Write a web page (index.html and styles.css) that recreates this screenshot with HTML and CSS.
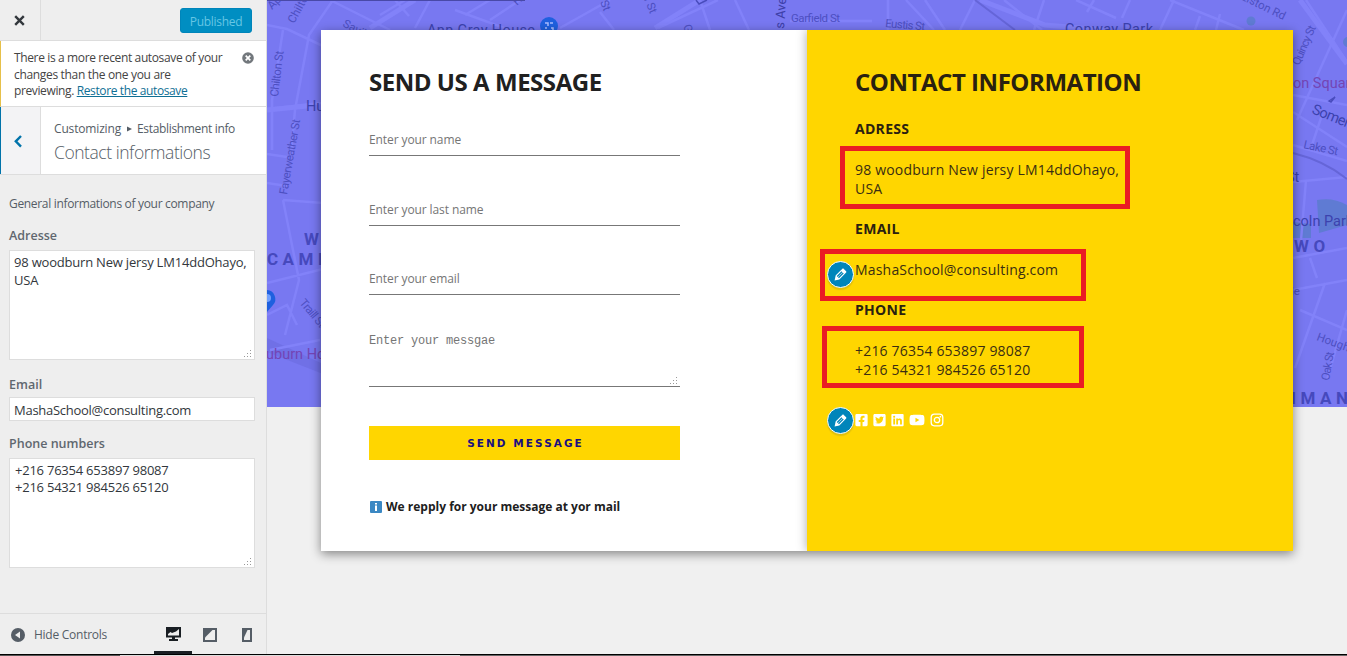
FILE: index.html
```html
<!DOCTYPE html>
<html lang="en">
<head>
<meta charset="utf-8">
<title>Customize: Contact informations</title>
<link rel="stylesheet" href="styles.css">
</head>
<body>
<div class="app">
  <aside class="sidebar">
    <header class="topbar">
      <span class="close"><svg width="11" height="11" viewBox="0 0 11 11"><path d="M1.200 1.200l8.600 8.600M9.800 1.200L1.200 9.800" stroke="#32373c" stroke-width="2.400"/></svg></span>
      <span class="published">Published</span>
    </header>
    <section class="notice">
      <p><span class="n1">There is a more recent autosave of your</span><br><span class="n2">changes than the one you are</span><br><span class="n3">previewing. <a>Restore the autosave</a></span></p>
      <svg class="dismiss" width="12" height="12" viewBox="0 0 12 12"><circle cx="6" cy="6" r="5.800" fill="#72777c"/><path d="M3.700 3.700l4.600 4.600M8.300 3.700L3.700 8.300" stroke="#fff" stroke-width="1.700"/></svg>
    </section>
    <section class="heading">
      <span class="back"><svg width="8" height="13" viewBox="0 0 8 13"><path d="M7 1L1.800 6.300 7 11.600" fill="none" stroke="#0073aa" stroke-width="2.400"/></svg></span>
      <div class="crumbs">
        <div class="crumb"><span class="c1">Customizing</span><svg width="5" height="6" viewBox="0 0 5 6"><path d="M0 .5L5 3 0 5.500z" fill="#555d66"/></svg><span class="c2">Establishment info</span></div>
        <div class="current">Contact informations</div>
      </div>
    </section>
    <section class="controls">
      <p class="desc">General informations of your company</p>
      <label>Adresse</label>
      <div class="area">98 woodburn New jersy LM14ddOhayo,<br>USA<svg class="grip" width="8" height="8" viewBox="0 0 8 8"><path d="M6 0h1v1H6zM3 3h1v1H3zM6 3h1v1H6zM0 6h1v1H0zM3 6h1v1H3zM6 6h1v1H6z"/></svg></div>
      <label>Email</label>
      <div class="line">MashaSchool@consulting.com</div>
      <label>Phone numbers</label>
      <div class="area phones">+216 76354 653897 98087<br>+216 54321 984526 65120<svg class="grip" width="8" height="8" viewBox="0 0 8 8"><path d="M6 0h1v1H6zM3 3h1v1H3zM6 3h1v1H6zM0 6h1v1H0zM3 6h1v1H3zM6 6h1v1H6z"/></svg></div>
    </section>
    <footer class="bottom">
      <svg width="14" height="14" viewBox="0 0 14 14"><circle cx="7" cy="7" r="7" fill="#555d66"/><path d="M9 3.500v7L4 7z" fill="#eee"/></svg>
      <span class="hide">Hide Controls</span>
      <span class="device on"><svg width="15" height="14" viewBox="0 0 15 14"><path d="M0 0h15v10.500H9V12h3v2H3v-2h3v-1.500H0z" fill="#191e23"/><path d="M13 2v6.500H2V7l2.500-2 1.500 1 4-1.500z" fill="#eee"/></svg></span>
      <span class="device"><svg width="14" height="14" viewBox="0 0 14 14"><path d="M0 0h14v14H0z" fill="#555d66"/><path d="M12 2v10H2V9.500L9.500 2z" fill="#eee"/></svg></span>
      <span class="device"><svg width="10" height="14" viewBox="0 0 10 14"><path d="M0 0h10v14H0z" fill="#555d66"/><path d="M8 2v10H2V9.500L5.500 2z" fill="#eee"/></svg></span>
    </footer>
  </aside>
  <main class="preview">
    <svg class="map" width="1080" height="407" viewBox="267 0 1080 407">
      <rect x="267" width="1080" height="407" fill="#7878f1"/>
      <path d="M267 338l56 26v10l-56-22z" fill="#6a6ae0" opacity=".6"/>
      <g fill="#5f7bd3"><path d="M1317 200q16-3 30 5v20l-28 8z"/><circle cx="1251" cy="21" r="4.500"/><path d="M1293 222l18 2v14h-18z"/><circle cx="1348" cy="42" r="5"/></g>
      <g class="roads">
        <path d="M267 25l20 4 38 18M333 0l-24 35-14 75-4 45M283 30l-11 70v50M267 109l54-6M267 154l20 3M267 183l20 3M283 200l16 80-14 55M283 200l40 3M267 283l56-14M267 315l20-10 10 20M270 350l50-10M330 0l60 30M380 15l25-15M395 0l14 16M430 0l-15 28M455 10l55 20M465 15l25-15M490 20l30-20M560 28l50-28M600 12l14 18M658 28l60-28M700 0l10 30M735 0l14 30M790 21h82M888 0v30M906 0l28 30M925 0l20 30M975 0l-15 30M1004 0l38 30M1044 0l-10 30M1076 0l40 18M1094 0l-7 12M1130 0l-8 18M1174 0l-14 30M1170 0l74 30M1200 16l-5 14M1220 14l-4 16"/>
        <path d="M1306 0l41 62M1347 10l-50 110M1293 95l54 10M1293 112l54 35M1322 115l-10 30M1293 145l54 16M1293 182l54-5M1306 180l-5 60M1293 258l54-10M1310 258l7 20M1293 290l54-10M1325 283l-30 85M1300 310l47 20M1347 310l-20 70"/>
        <path class="wide" d="M267 110l40-4M370 28l45-28M980 0l65 25 60 5M655 28l45-28M1300 0l47 64"/>
      </g>
      <path d="M975 0l40 30M1293 153q32 8 54 26" fill="none" stroke="#6565d8" stroke-width="2"/>
      <g class="streets">
        <text transform="translate(294 24) rotate(-61)">Chilton St</text>
        <text transform="translate(272 10) rotate(-45)">Ap</text>
        <text transform="translate(278 97) rotate(-83)" textLength="46">Chilton St</text>
        <text transform="translate(287 195) rotate(-80)" textLength="76">Fayerweather St</text>
        <text transform="translate(342 26) rotate(28)">Saville St</text>
        <text transform="translate(299 303) rotate(50)" textLength="33">Traill St</text>
        <text transform="translate(517 6) rotate(-45)">H</text>
        <text transform="translate(600 2) rotate(68)">St</text>
        <text transform="translate(642 -6) rotate(68)">ill St</text>
        <text transform="translate(683 26) rotate(70)">G</text>
        <text transform="translate(784 29) rotate(-86)" class="dark">s Ave</text>
        <text x="791" y="22" textLength="49">Garfield St</text>
        <text transform="translate(885 27) rotate(5)" textLength="40">Eustis St</text>
        <text transform="translate(1240 -1) rotate(26)">Elston Rd</text>
        <text transform="translate(1299 66) rotate(-66)" textLength="42">Quincy St</text>
        <text transform="translate(1303 148) rotate(12)" textLength="35">Lake St</text>
        <text transform="translate(1316 340) rotate(20)">Hough</text>
        <text transform="translate(1329 381) rotate(-80)" textLength="29">Oak St</text>
        <text x="1291" y="295">le</text>
      </g>
      <g class="places">
        <text x="427" y="35" textLength="108">Ann Gray House</text>
        <text x="1065" y="34" textLength="88">Conway Park</text>
        <text x="306" y="111">Hur</text>
        <text x="1286" y="182">St</text>
        <text transform="translate(1311 113) rotate(22)" textLength="46">Somerv</text>
        <text x="1285" y="226">ncoln Park</text>
        <g fill="#7445b4"><text x="1293" y="88">on Square</text><text x="266" y="359">uburn Ho</text></g>
      </g>
      <g class="areas"><text x="304" y="245">WE</text><text x="267" y="265">CAMB</text><text x="1294" y="252">WO</text><text x="1291" y="404">IMAN</text></g>
      <path d="M1329 101l6-4-4 5zM696 0l3 4 8-4" fill="none" stroke="#494cbd" stroke-width="1.500"/>
      <g fill="#1f60df"><circle cx="549" cy="26" r="9"/><path d="M267 290a9 9 0 0 1 6 15l-6 7z"/></g>
      <path d="M545 23h3v3M550 23h3M545 28h2M551 28h2v3" fill="none" stroke="#a9bbff" stroke-width="1.500"/>
      <circle cx="267" cy="298" r="4" fill="#70a0ff"/>
      <path d="M267 0h258v1H267z" fill="#4949a8"/>
    </svg>
    <div class="card">
      <section class="form">
        <h2>SEND US A MESSAGE</h2>
        <div class="field">Enter your name</div>
        <div class="field">Enter your last name</div>
        <div class="field third">Enter your email</div>
        <div class="field message">Enter your messgae<svg class="grip" width="8" height="8" viewBox="0 0 8 8"><path d="M6 0h1v1H6zM3 3h1v1H3zM6 3h1v1H6zM0 6h1v1H0zM3 6h1v1H3zM6 6h1v1H6z"/></svg></div>
        <div class="send">SEND MESSAGE</div>
        <p class="reply"><svg width="12" height="12" viewBox="0 0 12 12"><rect width="12" height="12" rx="1" fill="#3b88c3"/><path d="M5 2h2v1.500H5zM5 4.500h2V10H5z" fill="#fff"/></svg><span>We repply for your message at yor mail</span></p>
      </section>
      <section class="info">
        <h2>CONTACT INFORMATION</h2>
        <h3>ADRESS</h3>
        <p>98 woodburn New jersy LM14ddOhayo,<br>USA</p>
        <h3>EMAIL</h3>
        <p>MashaSchool@consulting.com</p>
        <h3>PHONE</h3>
        <p>+216 76354 653897 98087<br>+216 54321 984526 65120</p>
        <div class="social">
          <svg width="13" height="14" viewBox="0 0 448 512"><path fill="#fff" d="M400 32H48A48 48 0 0 0 0 80v352a48 48 0 0 0 48 48h137.250V327.690h-63V256h63v-54.640c0-62.150 37-96.480 93.670-96.480 27.140 0 55.520 4.840 55.520 4.840v61h-31.270c-30.810 0-40.420 19.120-40.420 38.730V256h68.780l-11 71.690h-57.780V480H400a48 48 0 0 0 48-48V80a48 48 0 0 0-48-48z"/></svg>
          <svg width="13" height="14" viewBox="0 0 448 512"><path fill="#fff" d="M400 32H48C21.500 32 0 53.500 0 80v352c0 26.500 21.500 48 48 48h352c26.500 0 48-21.500 48-48V80c0-26.500-21.500-48-48-48zm-48.900 158.800c.2 2.800.2 5.700.2 8.500 0 86.700-66 186.600-186.600 186.600-37.200 0-71.700-10.800-100.700-29.400 5.300.6 10.400.8 15.800.8 30.700 0 58.900-10.400 81.400-28-28.800-.6-53-19.500-61.300-45.500 10.100 1.500 19.200 1.500 29.600-1.200-30-6.100-52.500-32.500-52.500-64.400v-.8c8.700 4.900 18.900 7.900 29.600 8.300a65.447 65.447 0 0 1-29.200-54.600c0-12.200 3.200-23.400 8.900-33.100 32.300 39.800 80.800 65.800 135.200 68.600-9.300-44.500 24-80.600 64-80.600 18.900 0 35.900 7.900 47.900 20.700 14.800-2.800 29-8.300 41.600-15.800-4.900 15.200-15.200 28-28.800 36.100 13.200-1.400 26-5.100 37.800-10.200-8.900 13.100-20.100 24.700-32.900 34z"/></svg>
          <svg width="13" height="14" viewBox="0 0 448 512"><path fill="#fff" d="M416 32H31.900C14.300 32 0 46.500 0 64.300v383.400C0 465.500 14.300 480 31.900 480H416c17.600 0 32-14.500 32-32.300V64.300c0-17.800-14.400-32.300-32-32.300zM135.400 416H69V202.200h66.500V416zm-33.200-243c-21.300 0-38.500-17.300-38.500-38.500S80.900 96 102.200 96c21.200 0 38.500 17.300 38.500 38.500 0 21.300-17.200 38.500-38.500 38.500zm282.100 243h-66.400V312c0-24.800-.5-56.700-34.500-56.700-34.600 0-39.900 27-39.900 54.900V416h-66.400V202.200h63.700v29.200h.9c8.900-16.800 30.600-34.500 62.900-34.500 67.200 0 79.700 44.300 79.700 101.900V416z"/></svg>
          <svg width="16" height="14" viewBox="0 0 576 512"><path fill="#fff" d="M549.655 124.083c-6.281-23.650-24.787-42.276-48.284-48.597C458.781 64 288 64 288 64S117.220 64 74.629 75.486c-23.497 6.322-42.003 24.947-48.284 48.597-11.412 42.867-11.412 132.305-11.412 132.305s0 89.438 11.412 132.305c6.281 23.650 24.787 41.500 48.284 47.821C117.220 448 288 448 288 448s170.780 0 213.371-11.486c23.497-6.321 42.003-24.171 48.284-47.821 11.412-42.867 11.412-132.305 11.412-132.305s0-89.438-11.412-132.305zm-317.510 213.508V175.185l142.739 81.205-142.739 81.201z"/></svg>
          <svg width="14" height="14" viewBox="0 0 14 14"><rect x="1.200" y="1.200" width="11.600" height="11.600" rx="3.200" fill="none" stroke="#fff" stroke-width="1.300"/><circle cx="7" cy="7" r="2.700" fill="none" stroke="#fff" stroke-width="1.300"/><circle cx="10.400" cy="3.700" r=".9" fill="#fff"/></svg>
        </div>
        <span class="mark m1"></span><span class="mark m2"></span><span class="mark m3"></span>
        <span class="edit ed1"><svg width="17" height="17" viewBox="0 0 20 20"><path fill="#fff" d="M13.890 3.390l2.710 2.720c.46.460.42 1.240.030 1.640l-8.010 8.020-5.560 1.160 1.160-5.580s7.600-7.630 7.990-8.030c.39-.39 1.220-.39 1.680.070zm-2.730 2.790l-5.590 5.610 1.110 1.110 5.540-5.650zm-2.970 8.230l5.580-5.600-1.070-1.080-5.590 5.600z"/></svg></span>
        <span class="edit ed2"><svg width="17" height="17" viewBox="0 0 20 20"><path fill="#fff" d="M13.890 3.390l2.710 2.720c.46.460.42 1.240.030 1.640l-8.010 8.020-5.560 1.160 1.160-5.580s7.600-7.630 7.990-8.030c.39-.39 1.220-.39 1.680.070zm-2.730 2.790l-5.590 5.610 1.110 1.110 5.540-5.650zm-2.970 8.230l5.580-5.600-1.070-1.080-5.590 5.600z"/></svg></span>
      </section>
    </div>
  </main>
</div>
<div class="edge"></div>
</body>
</html>
```
FILE: styles.css
```css
* { box-sizing: border-box; }
body { margin: 0; height: 656px; overflow: hidden; background: #f0f0f0; font-family: "Open Sans", sans-serif; display: flex; flex-direction: column; white-space: nowrap; }
p, h2, h3 { margin: 0; }
svg { display: block; flex: none; }
.app { display: flex; height: 655px; }
.edge { height: 1px; background: linear-gradient(90deg, #555 0 120px, #ddd 120px 460px, #666 460px); box-shadow: 0 -1px #000; position: relative; z-index: 3; }

.sidebar { width: 267px; flex: none; background: #eee; border-right: 1px solid #ddd; display: flex; flex-direction: column; color: #555d66; font-size: 13px; }
.topbar { height: 41px; border-bottom: 1px solid #ddd; display: flex; align-items: center; justify-content: space-between; padding-right: 14px; }
.close { width: 41px; height: 40px; border-right: 1px solid #ddd; display: flex; align-items: center; justify-content: center; padding-right: 1px; }
.published { width: 72px; height: 25px; border-radius: 3px; background: #008ec2; border: 1px solid #0085ba; color: #66c6e4; display: flex; align-items: center; justify-content: center; padding-top: 2px; font-size: 12px; letter-spacing: -.3px; }
.notice { height: 66px; background: #fff; border-left: 1px solid #e6c04a; border-bottom: 1px solid #ddd; padding: 9px 12px 0 13px; display: flex; justify-content: space-between; color: #444; font-size: 12px; line-height: 16.500px; }
.n1 { letter-spacing: -.37px; }
.n2 { letter-spacing: -.33px; }
.n3 { letter-spacing: -.38px; }
.notice a { color: #0f6f94; text-decoration: underline; }
.dismiss { margin-top: 2px; }
.heading { height: 68px; background: #fff; border-bottom: 1px solid #ddd; display: flex; }
.back { width: 41px; border-left: 1px solid #0073aa; border-right: 1px solid #ddd; background: #f3f3f5; display: flex; align-items: center; justify-content: center; padding: 2px 5px 0 0; }
.crumbs { padding: 13px 0 0 13px; }
.crumb { display: flex; align-items: center; line-height: 18px; font-size: 12px; gap: 5.500px; }
.c1 { letter-spacing: -.16px; }
.c2 { letter-spacing: -.34px; }
.current { font-size: 17.500px; line-height: 26px; margin-top: 1px; font-weight: 300; letter-spacing: -.45px; }
.controls { flex: 1; padding: 20px 11px 0 9px; display: flex; flex-direction: column; }
.desc { line-height: 18px; font-size: 12px; letter-spacing: -.32px; }
label { font-weight: 600; line-height: 18px; margin: 14px 0 5px; display: block; font-size: 12.500px; color: #60676f; }
.area { height: 110px; border: 1px solid #ddd; background: #fff; padding: 2px 4px; line-height: 18px; color: #32373c; position: relative; letter-spacing: -.2px; }
.area.phones { line-height: 17px; padding: 3px 5px; letter-spacing: -.23px; }
.area + label { margin: 16px 0 3px; }
.line { height: 24px; border: 1px solid #ddd; background: #fff; padding: 0 4px; line-height: 25px; color: #32373c; letter-spacing: -.27px; }
.line + label { margin: 14px 0 5px; }
.grip { position: absolute; right: 2px; bottom: 1px; fill: #999; }
.bottom { height: 42px; border-top: 1px solid #ddd; display: flex; align-items: center; padding-left: 11px; }
.hide { padding-left: 9px; width: 129px; font-size: 12px; letter-spacing: -.26px; }
.device { width: 37px; height: 41px; display: flex; align-items: center; justify-content: center; padding-right: 2px; }
.device.on { width: 38px; border-bottom: 4px solid #191e23; padding: 3px 0 0; }

.preview { flex: 1; display: grid; grid-template-columns: 1080px; align-items: start; overflow: hidden; }
.map { grid-area: 1 / 1; }
.map .roads { fill: none; stroke: #8282f9; stroke-width: 2.500; }
.map .wide { stroke-width: 5; }
.map text { font-family: Roboto, sans-serif; }
.streets { fill: #4d4fc1; font-size: 11.500px; }
.streets .dark { fill: #3d3fa8; font-size: 13px; }
.places { fill: #3c42ae; font-size: 14.500px; }
.areas { fill: #4649bd; font-size: 17px; font-weight: 700; letter-spacing: 4.500px; }
.card { grid-area: 1 / 1; margin: 30px 0 0 54px; width: 972px; height: 521px; display: flex; background: #fff; box-shadow: 0 3px 10px rgba(0,0,0,.45); position: relative; color: #202020; }
.card h2 { font-size: 24px; line-height: 32px; font-weight: 700; letter-spacing: -.46px; }
.form { width: 486px; padding: 36px 127px 0 48px; }
.field { height: 33px; border-bottom: 1px solid #777; font-size: 12px; line-height: 33px; color: #757575; margin-top: 25px; position: relative; letter-spacing: -.1px; }
.field + .field { margin-top: 37px; }
.field + .third { margin-top: 36px; }
.field.message { height: 60px; font-family: "Liberation Mono", monospace; line-height: 29px; letter-spacing: -.2px; }
.field + .message { margin-top: 32px; }
.send { margin-top: 39px; height: 34px; background: #ffd600; color: #1a0f80; font-weight: 700; font-size: 10.500px; letter-spacing: 2.050px; display: flex; align-items: center; justify-content: center; padding-left: 2px; font-family: "DejaVu Sans", sans-serif; }
.reply { margin-top: 38px; display: flex; align-items: center; gap: 4px; padding-left: 1px; font-size: 12px; font-weight: 700; line-height: 18px; }
.info { width: 486px; background: #ffd600; box-shadow: 0 0 10px rgba(0,0,0,.35); clip-path: inset(0 0 0 -12px); padding: 36px 48px 0; position: relative; font-size: 14px; color: #3a2d12; }
.info h2, .info h3 { color: #2a2110; }
.info h3 { font-size: 14px; line-height: 20px; margin: 21px 0 21px; letter-spacing: .3px; }
.info p { line-height: 19px; letter-spacing: .19px; }
.social { display: flex; gap: 5px; margin-top: 34px; }
.mark { position: absolute; border: 5px solid #ea1c24; }
.m1 { left: 33px; top: 116px; width: 290px; height: 63px; }
.m2 { left: 13px; top: 219px; width: 266px; height: 52px; }
.m3 { left: 15px; top: 296px; width: 262px; height: 62px; }
.edit { position: absolute; left: 20px; width: 27px; height: 27px; border-radius: 50%; border: 1.500px solid #fff; background: #0085ba; display: flex; align-items: center; justify-content: center; padding-right: 1px; box-shadow: 0 2px 1px rgba(46,68,83,.15); }
.ed1 { top: 231px; }
.ed2 { top: 377px; }
```
